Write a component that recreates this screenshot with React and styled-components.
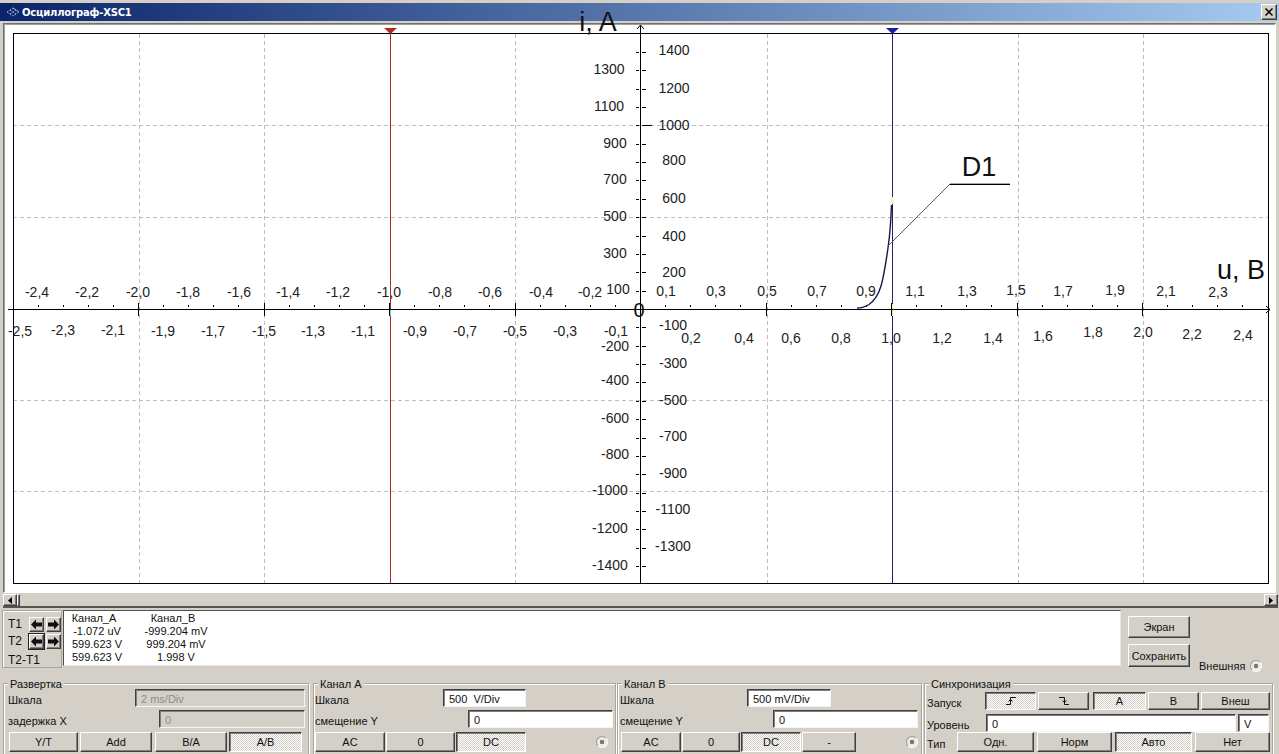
import styled, { createGlobalStyle, css } from "styled-components";

const GlobalStyle = createGlobalStyle`
  html, body { margin: 0; padding: 0; background: #d4d0c8; }
`;

const bevel = css`
  border: 1px solid;
  border-color: #fff #404040 #404040 #fff;
  box-shadow: inset -1px -1px 0 #808080;
`;

const Page = styled.div`
  width: 1279px;
  height: 754px;
  overflow: hidden;
  display: flex;
  flex-direction: column;
  background: #d4d0c8;
  color: #111;
  font: 11px "Liberation Sans", Arial, sans-serif;
`;

const TitleBar = styled.div`
  height: 18px;
  margin-top: 3px;
  flex: none;
  padding: 0 2px 0 6px;
  display: flex;
  align-items: center;
  gap: 2px;
  background: linear-gradient(90deg, #0a246a, #a6caf0);
  color: #fff;
  font: bold 10px "DejaVu Sans", sans-serif;
  letter-spacing: -0.2px;
`;

const CloseButton = styled.div`
  ${bevel}
  margin-left: auto;
  width: 14px;
  height: 14px;
  background: #d4d0c8;
  display: flex;
  align-items: center;
  justify-content: center;
`;

const PlotFrame = styled.div`
  height: 568px;
  margin: 2px 3px 0 3px;
  flex: none;
  background: #fff;
  border: 1px solid;
  border-color: #707070 #fff #fff #707070;
  box-shadow: inset 1px 1px 0 #a0a0a0;
`;

const PlotSvg = styled.svg`
  display: block;
  overflow: visible;
`;

const ScrollBar = styled.div`
  height: 12px;
  margin: 1px 1px 0 3px;
  flex: none;
  display: flex;
  border-bottom: 2px solid #555;
`;

const ScrollButton = styled.div`
  ${bevel}
  width: ${(p) => p.$w}px;
  box-sizing: border-box;
  background: #d4d0c8;
  display: flex;
  align-items: center;
  justify-content: center;
  ${(p) => p.$right && "margin-left: auto;"}
`;

const MeasureRow = styled.div`
  height: 58px;
  margin-top: 2px;
  padding-left: 2px;
  flex: none;
  display: flex;
`;

const CursorBox = styled.div`
  width: 60px;
  box-sizing: border-box;
  border: 1px solid #a8a59c;
  box-shadow: inset 1px 1px 0 #fff;
  padding: 5px 0 0 5px;
`;

const CursorRow = styled.div`
  height: 16px;
  margin-bottom: 1px;
  display: flex;
  align-items: center;
  gap: 2px;
`;

const CursorName = styled.span`
  width: 19px;
  font-size: 12px;
`;

const ArrowButton = styled.div`
  ${bevel}
  width: 15px;
  height: 15px;
  box-sizing: border-box;
  display: flex;
  align-items: center;
  justify-content: center;
  ${(p) => p.$focus && "outline: 1px solid #222;"}
`;

const DiffName = styled.div`
  margin-top: 4px;
  font-size: 12px;
`;

const Readout = styled.div`
  width: 1058px;
  height: 56px;
  margin-left: 1px;
  box-sizing: border-box;
  background: #fff;
  border: 1px solid;
  border-color: #505050 #e8e8e8 #e8e8e8 #505050;
  display: grid;
  grid-template-columns: 66px 92px;
  grid-auto-rows: 13px;
  align-content: center;
  text-align: center;
  font-size: 11px;
`;

const ReadoutCell = styled.span`
  ${(p) => p.$head && "padding-right: 6px;"}
`;

const SideButtons = styled.div`
  margin: 6px 0 0 7px;
  display: flex;
  flex-direction: column;
  gap: 6px;
`;

const ExternalTrigger = styled.div`
  align-self: flex-end;
  margin: 0 0 -4px 9px;
  display: flex;
  align-items: center;
  gap: 5px;
`;

const Controls = styled.div`
  margin-top: 15px;
  padding-left: 3px;
  display: flex;
  flex: none;
`;

const Group = styled.div`
  position: relative;
  width: ${(p) => p.$w}px;
  height: 80px;
  margin-right: ${(p) => p.$gap || 0}px;
  box-sizing: border-box;
  flex: none;
  border: 1px solid #a8a59c;
  box-shadow: inset 1px 1px 0 #fff, 1px 1px 0 #fff;
`;

const Legend = styled.span`
  position: absolute;
  top: -6px;
  left: 4px;
  padding: 0 2px;
  background: #d4d0c8;
  line-height: 12px;
`;

const Row = styled.div`
  display: flex;
  align-items: center;
  margin-top: ${(p) => p.$top}px;
  padding-left: ${(p) => p.$left}px;
  gap: ${(p) => p.$gap || 0}px;
`;

const Label = styled.span`
  width: ${(p) => p.$w}px;
  flex: none;
  white-space: nowrap;
  padding-top: 4px;
  box-sizing: border-box;
`;

const Field = styled.div`
  width: ${(p) => p.$w}px;
  height: 18px;
  flex: none;
  box-sizing: border-box;
  padding: 3px 0 0 5px;
  border: 1px solid;
  border-color: #404040 #f4f4f4 #f4f4f4 #404040;
  box-shadow: inset 1px 1px 0 #808080;
  background: ${(p) => (p.$disabled ? "#d4d0c8" : "#fff")};
  color: ${(p) => (p.$disabled ? "#8c8c8c" : "#111")};
`;

const Button = styled.div`
  ${bevel}
  width: ${(p) => p.$w}px;
  height: ${(p) => p.$h || 20}px;
  margin-left: ${(p) => p.$ml || 0}px;
  flex: none;
  box-sizing: border-box;
  display: flex;
  align-items: center;
  justify-content: center;
  background: #d4d0c8;
  ${(p) =>
    p.$on &&
    css`
      border-color: #404040 #fff #fff #404040;
      box-shadow: inset 1px 1px 0 #808080;
      background: repeating-conic-gradient(#d4d0c8 0 25%, #fff 0 50%) 0 0 / 2px 2px;
    `}
`;

const Radio = styled.div`
  width: 10px;
  height: 10px;
  flex: none;
  border-radius: 50%;
  border: 1px solid #9a9a9a;
  border-right-color: #fff;
  border-bottom-color: #fff;
  background: radial-gradient(circle, #777 0 2px, #eeeae2 2.5px);
  ${(p) => p.$auto && `margin: 0 ${p.$auto}px 0 auto;`}
`;

const AxisText = styled.text`
  font: 14px "Liberation Sans", Arial, sans-serif;
  fill: #222;
  text-anchor: middle;
  dominant-baseline: central;
`;

const NoteText = styled.text`
  font: ${(p) => p.$size || 27}px "Liberation Sans", Arial, sans-serif;
  fill: #111;
  text-anchor: middle;
  dominant-baseline: central;
`;

const xLabels = [
  ["-2,4", 37, 292], ["-2,2", 87, 292], ["-2,0", 138, 292], ["-1,8", 188, 292], ["-1,6", 239, 292],
  ["-1,4", 288, 292], ["-1,2", 338, 292], ["-1,0", 389, 292], ["-0,8", 440, 292], ["-0,6", 490, 292],
  ["-0,4", 541, 292], ["-0,2", 590, 292], ["0,1", 666, 291], ["0,3", 716, 291], ["0,5", 767, 291],
  ["0,7", 817, 291], ["0,9", 866, 291], ["1,1", 915, 291], ["1,3", 967, 291], ["1,5", 1016, 290],
  ["1,7", 1063, 291], ["1,9", 1115, 290], ["2,1", 1166, 291], ["2,3", 1218, 292],
  ["-2,5", 20, 331], ["-2,3", 63, 330], ["-2,1", 113, 330], ["-1,9", 163, 331], ["-1,7", 213, 331],
  ["-1,5", 264, 331], ["-1,3", 313, 331], ["-1,1", 363, 331], ["-0,9", 415, 331], ["-0,7", 465, 331],
  ["-0,5", 515, 331], ["-0,3", 565, 331], ["-0,1", 616, 331], ["0,2", 691, 338], ["0,4", 744, 338],
  ["0,6", 791, 338], ["0,8", 841, 338], ["1,0", 891, 338], ["1,2", 942, 338], ["1,4", 993, 338],
  ["1,6", 1043, 336], ["1,8", 1093, 332], ["2,0", 1143, 332], ["2,2", 1192, 334], ["2,4", 1243, 335],
];

const yLabels = [
  ["1300", 609, 69], ["1100", 609, 106], ["900", 615, 143], ["700", 615, 179], ["500", 615, 216],
  ["300", 615, 253], ["100", 618, 289], ["-200", 615, 346], ["-400", 615, 380], ["-600", 615, 418],
  ["-800", 615, 454], ["-1000", 610, 490], ["-1200", 610, 528], ["-1400", 610, 565],
  ["1400", 674, 50], ["1200", 674, 88], ["1000", 674, 125], ["800", 674, 160], ["600", 674, 198],
  ["400", 674, 236], ["200", 674, 272], ["-100", 673, 325], ["-300", 673, 363], ["-500", 673, 400],
  ["-700", 673, 436], ["-900", 673, 473], ["-1100", 673, 509], ["-1300", 673, 546],
];

const gridX = [139.5, 264.5, 515.5, 767.5, 1018.5, 1143.5];
const gridY = [125.5, 217.5, 400.5, 491.5];

const xTicks = [];
for (let k = -25; k <= 25; k++) xTicks.push({ x: Math.round(640 + k * 25.1) + 0.5, major: k % 5 === 0 });

const yTicks = [];
for (let k = -14; k <= 14; k++) if (k !== 0) yTicks.push(Math.round(309 - k * 18.37) + 0.5);

const Plot = () => (
  <PlotSvg width="1271" height="566" viewBox="4 24 1271 566">
    <g stroke="#bdbdbd" strokeDasharray="4 3">
      {gridX.map((x) => <line key={x} x1={x} x2={x} y1="34" y2="583" />)}
      {gridY.map((y) => <line key={y} x1="13" x2="1269" y1={y} y2={y} />)}
    </g>
    <rect x="13.5" y="33.5" width="1255" height="550" fill="none" stroke="#000" />
    <line x1="390.5" x2="390.5" y1="30" y2="583" stroke="#a03030" />
    <line x1="892.5" x2="892.5" y1="30" y2="583" stroke="#22226e" />
    <path d="M384 28h13l-6.500 6z" fill="#b02a20" />
    <path d="M886 28h13l-6.500 6z" fill="#1c1ca0" />
    <line x1="390.5" x2="390.5" y1="309" y2="316" stroke="#60d8e0" />
    <line x1="892.5" x2="892.5" y1="197" y2="204" stroke="#f4f4a0" strokeWidth="2" />
    <line x1="892.500" x2="892.500" y1="304" y2="316" stroke="#f4f4a0" strokeWidth="2" />
    <g stroke="#000">
      <line x1="8" x2="1270" y1="309.500" y2="309.500" />
      <line x1="640.500" x2="640.500" y1="25" y2="583" />
      <path d="M637 29l3.500-4 3.500 4M1266 306l4 3.500-4 3.500" fill="none" />
      {xTicks.map(({ x, major }) =>
        major ? (
          <line key={x} x1={x} x2={x} y1="303" y2="316" />
        ) : (
          <line key={x} x1={x} x2={x} y1="305" y2="307" />
        )
      )}
      {yTicks.map((y) => (
        <path key={y} d={`M636 ${y}h3M642 ${y}h4`} />
      ))}
      <line x1="642" x2="652" y1="125.500" y2="125.500" />
    </g>
    {[...xLabels, ...yLabels].map(([t, x, y]) => (
      <AxisText key={t} x={x} y={y}>{t}</AxisText>
    ))}
    <path
      d="M857 308 C862 308 866 306.500 869 304.500 C874 301 878 296 881 286 C884 276 886 262 888 248 C890 234 891 220 891.500 205"
      fill="none"
      stroke="#16164e"
      strokeWidth="1.400"
    />
    <path d="M888 246L950 184H1010" fill="none" stroke="#555" />
    <line x1="950" x2="1010" y1="184.500" y2="184.500" stroke="#000" />
    <NoteText x="979" y="167">D1</NoteText>
    <NoteText x="598" y="22">i, A</NoteText>
    <NoteText x="1241" y="270">u, B</NoteText>
    <NoteText x="639" y="310" $size={20}>0</NoteText>
  </PlotSvg>
);

const ArrowIcon = ({ right }) => (
  <svg width="11" height="11" viewBox="0 0 11 11">
    <path
      d={right ? "M11 5.500L6 0.500V3.500H0V7.500H6V10.500Z" : "M0 5.500L5 0.500V3.500H11V7.500H5V10.500Z"}
      fill="#111"
    />
  </svg>
);

const EdgeIcon = ({ falling }) => (
  <svg width="12" height="10" viewBox="0 0 12 10">
    <path
      d={falling ? "M1 1.500H6.500V8.500H11M4.500 4.500L6.500 6.500L8.500 4.500" : "M1 8.500H5.500V1.500H11M3.500 5.500L5.500 3.500L7.500 5.500"}
      fill="none"
      stroke="#111"
    />
  </svg>
);

const TitleIcon = () => (
  <svg width="14" height="10" viewBox="0 0 14 10">
    <path d="M1 5L7 1L13 5L7 9Z M4 3L10 7 M7 1L13 5 M4 7L10 3" fill="none" stroke="#c8d4ec" strokeDasharray="1 1" />
  </svg>
);

const readings = [
  ["Канал_A", "Канал_B"],
  ["-1.072 uV", "-999.204 mV"],
  ["599.623 V", "999.204 mV"],
  ["599.623 V", "1.998 V"],
];

const App = () => (
  <Page>
    <GlobalStyle />
    <TitleBar>
      <TitleIcon />
      <span>Осциллограф-XSC1</span>
      <CloseButton>
        <svg width="8" height="8" viewBox="0 0 8 8">
          <path d="M0.500 0.500L7.500 7.500M7.500 0.500L0.500 7.500" stroke="#000" strokeWidth="1.500" />
        </svg>
      </CloseButton>
    </TitleBar>

    <PlotFrame>
      <Plot />
    </PlotFrame>

    <ScrollBar>
      <ScrollButton $w={14}>
        <svg width="4" height="7" viewBox="0 0 4 7"><path d="M4 0V7L0 3.500Z" fill="#000" /></svg>
      </ScrollButton>
      <ScrollButton $w={3} />
      <ScrollButton $w={14} $right>
        <svg width="4" height="7" viewBox="0 0 4 7"><path d="M0 0V7L4 3.500Z" fill="#000" /></svg>
      </ScrollButton>
    </ScrollBar>

    <MeasureRow>
      <CursorBox>
        <CursorRow>
          <CursorName>T1</CursorName>
          <ArrowButton><ArrowIcon /></ArrowButton>
          <ArrowButton><ArrowIcon right /></ArrowButton>
        </CursorRow>
        <CursorRow>
          <CursorName>T2</CursorName>
          <ArrowButton $focus><ArrowIcon /></ArrowButton>
          <ArrowButton><ArrowIcon right /></ArrowButton>
        </CursorRow>
        <DiffName>T2-T1</DiffName>
      </CursorBox>
      <Readout>
        {readings.flat().map((t, i) => <ReadoutCell key={i} $head={i < 2}>{t}</ReadoutCell>)}
      </Readout>
      <SideButtons>
        <Button $w={62} $h={22}>Экран</Button>
        <Button $w={62} $h={23}>Сохранить</Button>
      </SideButtons>
      <ExternalTrigger>
        <span>Внешняя</span>
        <Radio />
      </ExternalTrigger>
    </MeasureRow>

    <Controls>
      <Group $w={306} $gap={4}>
        <Legend>Развертка</Legend>
        <Row $top={5} $left={4}>
          <Label $w={127}>Шкала</Label>
          <Field $w={170} $disabled>2 ms/Div</Field>
        </Row>
        <Row $top={3} $left={4}>
          <Label $w={151}>задержка X</Label>
          <Field $w={146} $disabled>0</Field>
        </Row>
        <Row $top={4} $left={5} $gap={2}>
          <Button $w={69}>Y/T</Button>
          <Button $w={72}>Add</Button>
          <Button $w={72} $ml={1}>B/A</Button>
          <Button $w={73} $on>A/B</Button>
        </Row>
      </Group>

      <Group $w={303} $gap={1}>
        <Legend>Канал А</Legend>
        <Row $top={5} $left={1}>
          <Label $w={128}>Шкала</Label>
          <Field $w={83}>500 &nbsp;V/Div</Field>
        </Row>
        <Row $top={3} $left={1}>
          <Label $w={153}>смещение Y</Label>
          <Field $w={145}>0</Field>
        </Row>
        <Row $top={4} $left={1} $gap={1}>
          <Button $w={70}>AC</Button>
          <Button $w={69}>0</Button>
          <Button $w={70} $on>DC</Button>
          <Radio $auto={7} />
        </Row>
      </Group>

      <Group $w={305} $gap={2}>
        <Legend>Канал В</Legend>
        <Row $top={5} $left={2}>
          <Label $w={127}>Шкала</Label>
          <Field $w={84}>500 mV/Div</Field>
        </Row>
        <Row $top={3} $left={2}>
          <Label $w={153}>смещение Y</Label>
          <Field $w={145}>0</Field>
        </Row>
        <Row $top={4} $left={3} $gap={1}>
          <Button $w={60}>AC</Button>
          <Button $w={58}>0</Button>
          <Button $w={60} $on>DC</Button>
          <Button $w={54}>-</Button>
          <Radio $auto={3} />
        </Row>
      </Group>

      <Group $w={349}>
        <Legend>Синхронизация</Legend>
        <Row $top={8} $left={2} $gap={2}>
          <Label $w={56}>Запуск</Label>
          <Button $w={51} $h={18} $on><EdgeIcon /></Button>
          <Button $w={51} $h={18}><EdgeIcon falling /></Button>
          <Button $w={53} $h={18} $on $ml={2}>A</Button>
          <Button $w={51} $h={18}>B</Button>
          <Button $w={69} $h={18}>Внеш</Button>
        </Row>
        <Row $top={4} $left={2} $gap={2}>
          <Label $w={57}>Уровень</Label>
          <Field $w={250}>0</Field>
          <Field $w={31}>V</Field>
        </Row>
        <Row $top={0} $left={2} $gap={3}>
          <Label $w={27}>Тип</Label>
          <Button $w={77}>Одн.</Button>
          <Button $w={75}>Норм</Button>
          <Button $w={77} $on>Авто</Button>
          <Button $w={75}>Нет</Button>
        </Row>
      </Group>
    </Controls>
  </Page>
);

export default App;
